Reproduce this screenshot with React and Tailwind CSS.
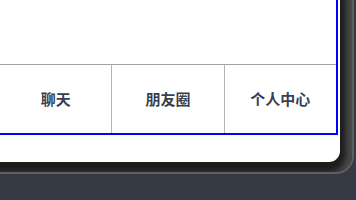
export default function App() {
  const tabs = ['聊天', '朋友圈', '个人中心'];
  return (
    <div className="w-[356px] h-[200px] bg-[#353a45] overflow-hidden">
      <div className="w-[354px] h-[174px] bg-[#1c1c1c] rounded-br-[18px] border-r-2 border-b-2 border-[#5e5e5e] shadow-[inset_-9px_-2px_6px_-3px_#4a4a4a] flex flex-col">
        <div className="w-[340px] h-[162px] bg-white rounded-br-[11px] flex flex-col">
          <div className="w-[338px] h-[135px] border-r-2 border-b-2 border-[#0000ff] flex flex-col justify-end">
            <div className="h-[69px] border-t border-[#a3a3a3] flex">
              {tabs.map((t, i) => (
                <div
                  key={t}
                  className={
                    'flex-1 flex items-center justify-center text-[15px] font-bold text-[#374151] ' +
                    (i < 2 ? 'border-r border-[#b5b5b5]' : '')
                  }
                  style={{ fontFamily: '"Noto Sans CJK SC", "Noto Sans", sans-serif' }}
                >
                  {t}
                </div>
              ))}
            </div>
          </div>
        </div>
      </div>
    </div>
  );
}
